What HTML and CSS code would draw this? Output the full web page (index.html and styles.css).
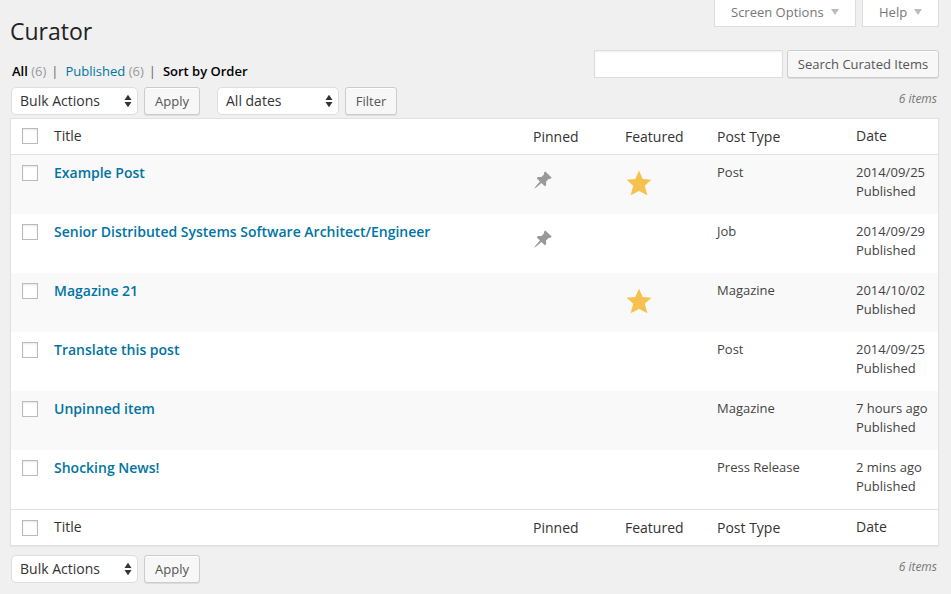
FILE: index.html
```html
<!DOCTYPE html>
<html lang="en">
<head>
<meta charset="utf-8">
<title>Curator</title>
<link rel="stylesheet" href="styles.css">
</head>
<body>
<svg class="defs" aria-hidden="true">
  <symbol id="pin" viewBox="0 0 18 18"><path d="M11.3.4 17.6 6.6 16.7 7.8 14.6 8 12.1 10.6 12.1 14.2 10.9 15.2 7.4 12 2.2 16.4.3 17.7 1.6 15.6 5.9 10.6 2.7 7.3 3.8 5.9 7.4 6 9.9 3.5 10.1 1.4Z"/></symbol>
  <symbol id="star" viewBox="0 0 26 26"><path d="M13 .6 16.7 9.1 25.4 9.8 18.8 15.8 21.4 25.2 13 21 4.6 25.2 7.2 15.8.6 9.8 9.3 9.1Z"/></symbol>
  <symbol id="updown" viewBox="0 0 8 14"><path d="M.5 6 4 .8 7.5 6ZM.5 8 4 13.2 7.5 8Z"/></symbol>
</svg>
<div class="wrap">
  <header class="top">
    <h1>Curator</h1>
    <div class="tabs">
      <a class="tab options">Screen Options<i class="caret"></i></a>
      <a class="tab help">Help<i class="caret"></i></a>
    </div>
  </header>
  <div class="filters">
    <div class="views"><b>All</b> <span class="count">(6)</span><span class="sep">|</span><a>Published</a> <span class="count">(6)</span><span class="sep">|</span><b>Sort by Order</b></div>
    <div class="search"><input type="text" aria-label="Search"><button class="search-btn">Search Curated Items</button></div>
  </div>
  <div class="nav">
    <div class="select bulk">Bulk Actions<svg><use href="#updown"/></svg></div>
    <button class="apply">Apply</button>
    <div class="select dates">All dates<svg><use href="#updown"/></svg></div>
    <button class="filter">Filter</button>
    <span class="items">6 items</span>
  </div>
  <main class="table">
    <div class="row head"><i class="check"></i><span class="edge">Title</span><span>Pinned</span><span>Featured</span><span>Post Type</span><span class="edge">Date</span></div>
    <div class="row"><i class="check"></i><a class="title">Example Post</a><div><svg class="pin"><use href="#pin"/></svg></div><div><svg class="star"><use href="#star"/></svg></div><div>Post</div><div>2014/09/25<br>Published</div></div>
    <div class="row"><i class="check"></i><a class="title">Senior Distributed Systems Software Architect/Engineer</a><div><svg class="pin"><use href="#pin"/></svg></div><div></div><div>Job</div><div>2014/09/29<br>Published</div></div>
    <div class="row"><i class="check"></i><a class="title">Magazine 21</a><div></div><div><svg class="star"><use href="#star"/></svg></div><div>Magazine</div><div>2014/10/02<br>Published</div></div>
    <div class="row"><i class="check"></i><a class="title">Translate this post</a><div></div><div></div><div>Post</div><div>2014/09/25<br>Published</div></div>
    <div class="row"><i class="check"></i><a class="title">Unpinned item</a><div></div><div></div><div>Magazine</div><div>7 hours ago<br>Published</div></div>
    <div class="row"><i class="check"></i><a class="title">Shocking News!</a><div></div><div></div><div>Press Release</div><div>2 mins ago<br>Published</div></div>
    <div class="row head foot"><i class="check"></i><span class="edge">Title</span><span>Pinned</span><span>Featured</span><span>Post Type</span><span class="edge">Date</span></div>
  </main>
  <div class="nav bottom">
    <div class="select bulk">Bulk Actions<svg><use href="#updown"/></svg></div>
    <button class="apply">Apply</button>
    <span class="items">6 items</span>
  </div>
</div>
</body>
</html>
```
FILE: styles.css
```css
* { box-sizing: border-box; }
body { margin: 0; background: #f0f0f0; color: #444; font: 13px/19px "Open Sans", sans-serif; overflow: hidden; }
.defs { display: none; }
svg { display: block; }
.wrap { padding: 0 12px 0 10px; }

.top { display: flex; justify-content: space-between; height: 50px; }
h1 { margin: 0; padding-top: 17px; font-size: 23px; font-weight: 400; line-height: 29px; color: #222; }
.tabs { display: flex; gap: 6px; }
.tab { display: flex; justify-content: space-between; height: 27px; padding: 0 16px; line-height: 24px; color: #777; background: #fff; border: 1px solid #ddd; border-top: 0; }
.options { width: 142px; }
.help { width: 77px; }
.caret { margin-top: 9px; border: 4px solid transparent; border-top: 6px solid #bbb; border-bottom: 0; height: 0; }

.filters { display: flex; justify-content: space-between; height: 37px; }
.views { padding: 12px 0 0 2px; color: #666; white-space: nowrap; }
.views b { font-weight: 600; color: #000; }
.views a { color: #0074a2; }
.count { color: #999; }
.sep { margin: 0 7px 0 5px; }
.search { display: flex; gap: 4px; height: 28px; }
.search input { width: 189px; height: 28px; border: 1px solid #ddd; background: #fff; box-shadow: inset 0 1px 2px rgba(0,0,0,.07); }

button { height: 28px; padding: 0; font: 13px/26px "Open Sans", sans-serif; color: #555; background: #f7f7f7; border: 1px solid #ccc; border-radius: 3px; box-shadow: inset 0 1px 0 #fff, 0 1px 0 rgba(0,0,0,.08); }
.search-btn { width: 152px; }
.apply { width: 56px; }
.filter { width: 52px; }

.nav { display: flex; height: 31px; padding-left: 1px; }
.nav.bottom { margin-top: 9px; }
.select { display: flex; justify-content: space-between; height: 28px; margin-right: 6px; padding: 0 5px 0 8px; font-size: 14px; line-height: 25px; color: #333; background: #fff; border: 1px solid #ddd; border-radius: 5px; }
.select svg { width: 8px; height: 14px; margin-top: 6px; fill: #333; }
.bulk { width: 127px; }
.dates { width: 122px; margin-left: 17px; }
.items { margin: 2px 2px 0 auto; font-size: 12px; font-style: italic; color: #777; }

.table { background: #fff; border: 1px solid #e1e1e1; box-shadow: 0 1px 1px rgba(0,0,0,.04); }
.row { display: grid; grid-template-columns: 32px 479px 92px 92px 139px 1fr; height: 59px; padding: 8px 0 0 11px; }
.row:nth-child(even) { background: #f9f9f9; }
.check { width: 16px; height: 16px; margin-top: 2px; background: #fff; border: 1px solid #bbb; box-shadow: inset 0 1px 2px rgba(0,0,0,.1); }
.title { font-size: 14px; font-weight: 600; color: #0074a2; line-height: 20px; }
.pin { width: 18px; height: 18px; margin: 8px 0 0 1px; fill: #999; }
.star { width: 26px; height: 26px; margin: 7px 0 0 1px; fill: #f7c150; }
.row.head { height: 36px; border-bottom: 1px solid #e1e1e1; font-size: 14px; color: #333; line-height: 20px; background: #fff; }
.row.head .check { margin-top: 1px; }
.row.head .edge { margin-top: -1px; }
.row.foot { border-bottom: 0; border-top: 1px solid #e1e1e1; }
.row.foot .check { margin-top: 2px; }
```
